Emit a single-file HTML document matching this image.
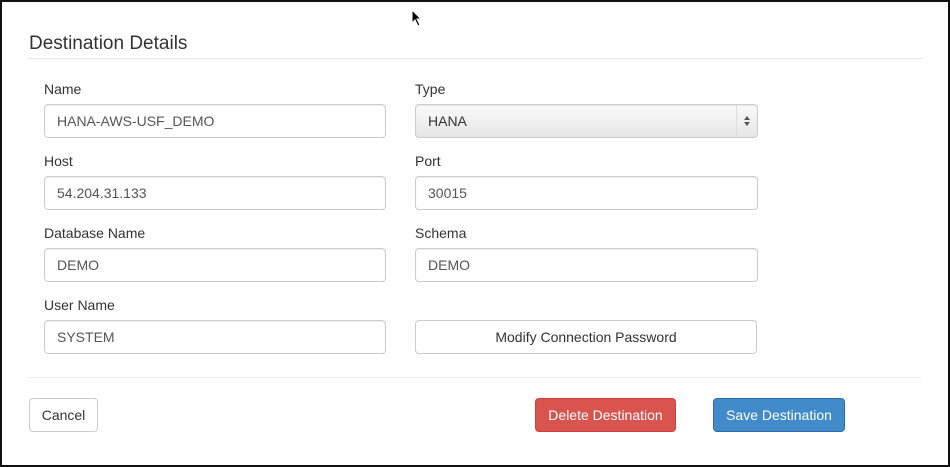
<!DOCTYPE html><html><head><style>
body{margin:0;width:950px;height:467px;background:#fff;font-family:"Liberation Sans",sans-serif;color:#333;position:relative;overflow:hidden}
.frame{position:absolute;left:0;top:0;width:946px;height:463px;border:2px solid #111}
.a{position:absolute}
h1{position:absolute;left:29px;top:33px;margin:0;font-size:19px;font-weight:normal;color:#333}
.hr{position:absolute;height:1px;background:#e5e5e5}
.l{position:absolute;font-size:14px;color:#333}
.i{position:absolute;width:340px;height:32px;border:1px solid #ccc;border-radius:4px;box-sizing:content-box;font-size:14px;line-height:32px;padding:0 0 0 0;text-indent:12px;color:#555;box-shadow:inset 0 1px 1px rgba(0,0,0,.075)}
.b{position:absolute;height:32px;border-radius:4px;font-size:14px;line-height:32px;text-align:center}
</style></head><body><div class="frame"></div>
<svg class="a" style="left:411px;top:9px" width="12" height="18" viewBox="0 0 12 18"><path d="M1 1 L1 14 L4 11 L7 17 L9 16 L6 10 L10 10 Z" fill="#000" stroke="#fff" stroke-width="1"/></svg>
<h1>Destination Details</h1>
<div class="hr" style="left:28px;top:58px;width:894px"></div>
<div class="l" style="left:44px;top:81px">Name</div>
<div class="i" style="left:44px;top:104px">HANA-AWS-USF_DEMO</div>
<div class="l" style="left:415px;top:81px">Type</div>
<div class="i" style="left:415px;top:104px;width:341px;background:linear-gradient(#fafafa,#e6e6e6);color:#333">HANA
<div class="a" style="right:0;top:0;width:20px;height:32px;border-left:1px solid #ddd"></div>
<svg class="a" style="right:7px;top:10px" width="6" height="12" viewBox="0 0 6 12"><path d="M0 5L3 1L6 5ZM0 7L3 11L6 7Z" fill="#555"/></svg></div>
<div class="l" style="left:44px;top:153px">Host</div>
<div class="i" style="left:44px;top:176px">54.204.31.133</div>
<div class="l" style="left:415px;top:153px">Port</div>
<div class="i" style="left:415px;top:176px;width:341px">30015</div>
<div class="l" style="left:44px;top:225px">Database Name</div>
<div class="i" style="left:44px;top:248px">DEMO</div>
<div class="l" style="left:415px;top:225px">Schema</div>
<div class="i" style="left:415px;top:248px;width:341px">DEMO</div>
<div class="l" style="left:44px;top:297px">User Name</div>
<div class="i" style="left:44px;top:320px">SYSTEM</div>
<div class="b" style="left:415px;top:320px;width:340px;border:1px solid #ccc;color:#333">Modify Connection Password</div>
<div class="hr" style="left:28px;top:377px;width:893px;background:#eee"></div>
<div class="b" style="left:29px;top:398px;width:67px;border:1px solid #ccc;color:#333">Cancel</div>
<div class="b" style="left:535px;top:398px;width:139px;border:1px solid #d43f3a;background:#d9534f;color:#fff">Delete Destination</div>
<div class="b" style="left:713px;top:398px;width:130px;border:1px solid #2e6da4;background:#428bca;color:#fff">Save Destination</div>
</body></html>
